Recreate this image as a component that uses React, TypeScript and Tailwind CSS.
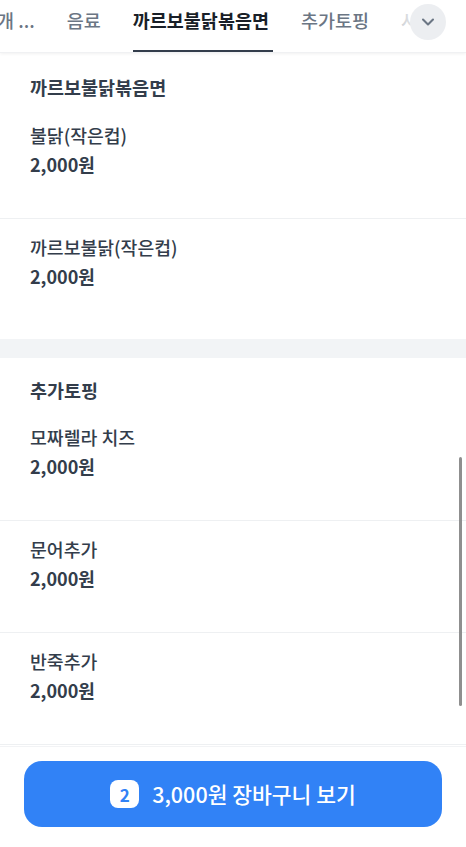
import React from "react";
import { ChevronDown } from "lucide-react";

const font = { fontFamily: '"Noto Sans CJK KR", "Noto Sans", sans-serif' };

function Item({ name, price, last }: { name: string; price: string; last?: boolean }) {
  return (
    <div className={`pl-[30px] pt-4 pb-[42px] ${last ? "border-b border-transparent" : "border-b border-[#eef0f2]"}`}>
      <div className="text-[18.3px] leading-[24px] text-[#333d4b] font-medium">{name}</div>
      <div className="mt-[5px] text-[18px] leading-[24px] text-[#333d4b] font-bold">{price}</div>
    </div>
  );
}

export default function App() {
  return (
    <div className="relative w-[466px] h-[847px] overflow-hidden bg-white flex flex-col" style={font}>
      {/* Tab bar */}
      <div className="relative h-[53px] shrink-0 bg-white shadow-[0_1px_3px_rgba(0,0,0,0.06)] border-b border-[#f0f1f3] z-10 overflow-hidden">
        <div className="flex items-start gap-[32px] ml-[-3px] whitespace-nowrap h-full">
          <div className="pt-[6px] text-[18.5px] leading-[28px] text-[#6b7684] font-medium">개 ...</div>
          <div className="pt-[6px] text-[18.5px] leading-[28px] text-[#6b7684] font-medium">음료</div>
          <div className="relative h-full pt-[6px]">
            <div className="text-[18.5px] leading-[28px] text-[#191f28] font-bold">까르보불닭볶음면</div>
            <div className="absolute left-0 right-[-4px] bottom-[-1px] h-[3px] bg-[#333d4b]" />
          </div>
          <div className="pt-[6px] text-[18.5px] leading-[28px] text-[#6b7684] font-medium">추가토핑</div>
          <div className="pt-[6px] text-[18.5px] leading-[28px] text-[#6b7684] font-medium">사이드</div>
        </div>
        <div className="absolute right-0 top-0 h-[50px] w-[72px] flex items-start justify-end pr-[20px] pt-[4px] bg-gradient-to-r from-white/60 via-white to-white">
          <div className="w-[36px] h-[36px] rounded-full bg-[#eceef1] flex items-center justify-center">
            <ChevronDown size={20} strokeWidth={2.5} color="#6b7684" />
          </div>
        </div>
      </div>

      {/* Content */}
      <div className="flex-1 overflow-hidden">
        <div className="pb-[8px]">
          <div className="pl-[30px] pt-[22px] pb-[8px] text-[18.5px] leading-[24px] font-bold text-[#333d4b]">까르보불닭볶음면</div>
          <Item name="불닭(작은컵)" price="2,000원" />
          <Item name="까르보불닭(작은컵)" price="2,000원" last />
        </div>
        <div className="h-[19px] bg-[#f2f4f6]" />
        <div>
          <div className="pl-[30px] pt-[20px] pb-[7px] text-[18.5px] leading-[24px] font-bold text-[#333d4b]">추가토핑</div>
          <Item name="모짜렐라 치즈" price="2,000원" />
          <Item name="문어추가" price="2,000원" />
          <Item name="반죽추가" price="2,000원" />
        </div>
      </div>

      {/* Bottom bar */}
      <div className="shrink-0 bg-white border-t border-[#f2f3f5] px-[24px] pt-[14px] pb-[20px]">
        <button className="w-full h-[66px] rounded-[18px] bg-[#3182f6] flex items-center justify-center gap-[13px]">
          <span className="w-[29px] h-[28px] rounded-[8px] bg-white text-[#3182f6] text-[17px] font-bold flex items-center justify-center leading-none">2</span>
          <span className="text-white text-[21.5px] font-medium leading-[28px]">3,000원 장바구니 보기</span>
        </button>
      </div>

      {/* Scrollbar overlay */}
      <div className="absolute left-[459px] top-[457px] w-[3px] h-[249px] rounded-full bg-[#8f8f8f]" />
    </div>
  );
}
